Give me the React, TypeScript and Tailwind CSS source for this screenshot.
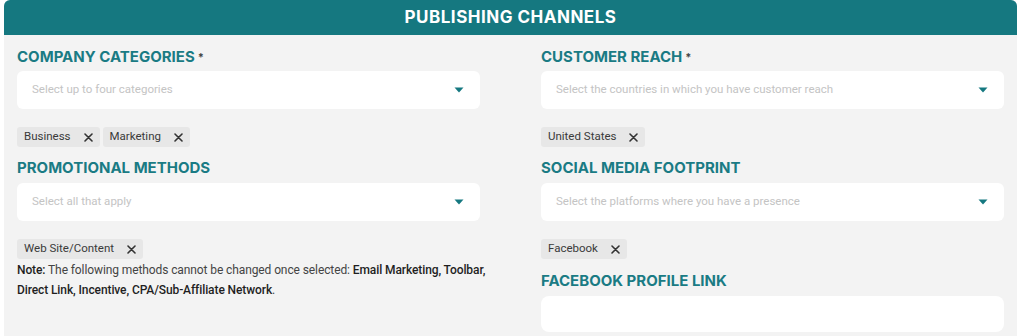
import React from 'react';

const Caret = () => (
  <svg width="10" height="6" viewBox="0 0 10 6" className="shrink-0">
    <path d="M0.5 0.5 H9.5 L5 5.5 Z" fill="#157880" />
  </svg>
);

const Cross = () => (
  <svg width="9" height="9" viewBox="0 0 9 9" className="shrink-0">
    <path d="M1 1 L8 8 M8 1 L1 8" stroke="#333" strokeWidth="1.6" strokeLinecap="round" />
  </svg>
);

const Label = ({ text, required, className = '' }: { text: string; required?: boolean; className?: string }) => (
  <div className={`h-5 text-[15px] leading-5 font-bold text-[#1a7b84] font-['Inter',sans-serif] ${className}`}>
    {text}
    {required && <span className="text-[#444] text-[11px] align-top ml-[3px]">*</span>}
  </div>
);

const Select = ({ placeholder, className = '' }: { placeholder: string; className?: string }) => (
  <div className={`h-[38px] bg-white rounded-md flex items-center justify-between pl-[15px] pr-[16px] ${className}`}>
    <span className="text-[11.5px] text-[#c4c4c4]">{placeholder}</span>
    <Caret />
  </div>
);

const Tags = ({ items, className = '' }: { items: string[]; className?: string }) => (
  <div className={`flex gap-[3px] ${className}`}>
    {items.map((t) => (
      <span key={t} className="h-5 bg-[#e7e7e7] rounded-[3px] flex items-center pl-[7px] pr-[7px] gap-[13px] text-[11.5px] text-[#3a3a3a]">
        {t}
        <Cross />
      </span>
    ))}
  </div>
);

export default function App() {
  return (
    <div className="w-[1024px] h-[336px] bg-white pl-[4px] pr-[7px] font-['Roboto',sans-serif] overflow-hidden">
      <div className="h-full bg-[#f3f3f3] rounded-t-md flex flex-col">
        <div className="h-[35px] bg-[#157880] rounded-t-md flex items-center justify-center">
          <h2 className="text-white font-bold text-[17px] tracking-[0.5px] font-['Inter',sans-serif]">PUBLISHING CHANNELS</h2>
        </div>

        <div className="grid grid-cols-2 gap-x-[61px] px-[13px]">
          <div className="flex flex-col">
            <Label text="COMPANY CATEGORIES" required className="mt-3" />
            <Select placeholder="Select up to four categories" className="mt-1" />
            <Tags items={['Business', 'Marketing']} className="mt-[18px]" />
            <Label text="PROMOTIONAL METHODS" className="mt-[11px]" />
            <Select placeholder="Select all that apply" className="mt-[5px]" />
            <Tags items={['Web Site/Content']} className="mt-[18px]" />
            <p className="mt-[1px] w-[472px] text-[12px] leading-5 text-[#444] tracking-[-0.1px]">
              <span className="font-medium text-[#1f1f1f]">Note:</span> The following methods cannot be changed once selected:{' '}
              <span className="font-medium text-[#1f1f1f]">Email Marketing, Toolbar, Direct Link, Incentive, CPA/Sub-Affiliate Network</span>.
            </p>
          </div>

          <div className="flex flex-col">
            <Label text="CUSTOMER REACH" required className="mt-3" />
            <Select placeholder="Select the countries in which you have customer reach" className="mt-1" />
            <Tags items={['United States']} className="mt-[18px]" />
            <Label text="SOCIAL MEDIA FOOTPRINT" className="mt-[11px]" />
            <Select placeholder="Select the platforms where you have a presence" className="mt-[5px]" />
            <Tags items={['Facebook']} className="mt-[18px]" />
            <Label text="FACEBOOK PROFILE LINK" className="mt-3" />
            <div className="mt-[5px] h-[36px] bg-white rounded-lg" />
          </div>
        </div>
      </div>
    </div>
  );
}
